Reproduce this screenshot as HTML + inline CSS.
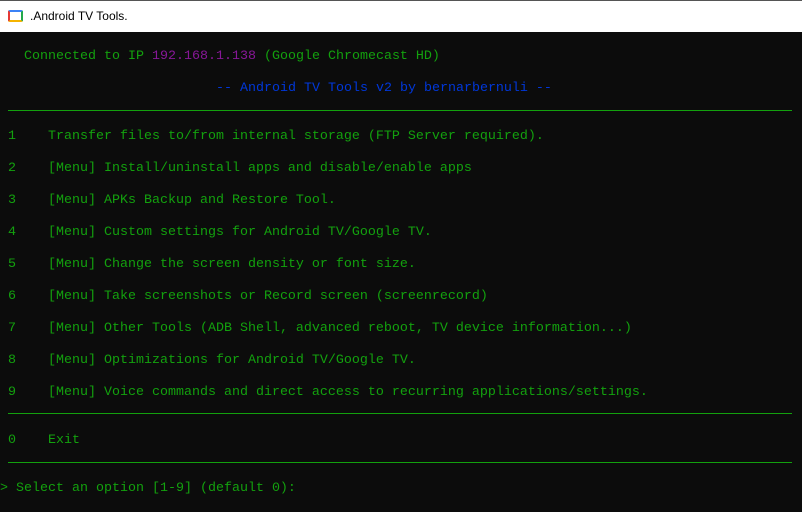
<!DOCTYPE html>
<html><head><meta charset="utf-8"><style>
body{margin:0;width:802px;height:512px;background:#0c0c0c;overflow:hidden;position:relative;font-family:"Liberation Mono",monospace;font-size:13.33px;color:#13a10e}
#tb{position:absolute;left:0;top:0;width:802px;height:31px;background:#fff;border-top:1px solid #555}
#tb span{position:absolute;left:30px;top:8px;font:12px "Liberation Sans",sans-serif;color:#000}
.ic{position:absolute;left:8px;top:9px;width:11px;height:8px;border:2px solid;border-color:#3b82f6 #22a84a #f5b400 #e53935;border-radius:2px}
.t{position:absolute;white-space:pre;line-height:16px}
.hr{position:absolute;left:8px;width:784px;height:1px;background:#13a10e}
.p{color:#881798}.b{color:#0037da}
</style></head><body>
<div id="tb"><div class="ic"></div><span>.Android TV Tools.</span></div>
<div class="t" style="left:24px;top:49px">Connected to IP <span class="p">192.168.1.138</span> (Google Chromecast HD)</div>
<div class="t b" style="left:216px;top:81px">-- Android TV Tools v2 by bernarbernuli --</div>
<div class="hr" style="top:110px"></div>
<div class="t" style="left:8px;top:129px">1    Transfer files to/from internal storage (FTP Server required).</div>
<div class="t" style="left:8px;top:161px">2    [Menu] Install/uninstall apps and disable/enable apps</div>
<div class="t" style="left:8px;top:193px">3    [Menu] APKs Backup and Restore Tool.</div>
<div class="t" style="left:8px;top:225px">4    [Menu] Custom settings for Android TV/Google TV.</div>
<div class="t" style="left:8px;top:257px">5    [Menu] Change the screen density or font size.</div>
<div class="t" style="left:8px;top:289px">6    [Menu] Take screenshots or Record screen (screenrecord)</div>
<div class="t" style="left:8px;top:321px">7    [Menu] Other Tools (ADB Shell, advanced reboot, TV device information...)</div>
<div class="t" style="left:8px;top:353px">8    [Menu] Optimizations for Android TV/Google TV.</div>
<div class="t" style="left:8px;top:385px">9    [Menu] Voice commands and direct access to recurring applications/settings.</div>
<div class="hr" style="top:413px"></div>
<div class="t" style="left:8px;top:433px">0    Exit</div>
<div class="hr" style="top:462px"></div>
<div class="t" style="left:0px;top:481px">&gt; Select an option [1-9] (default 0):</div>
</body></html>
